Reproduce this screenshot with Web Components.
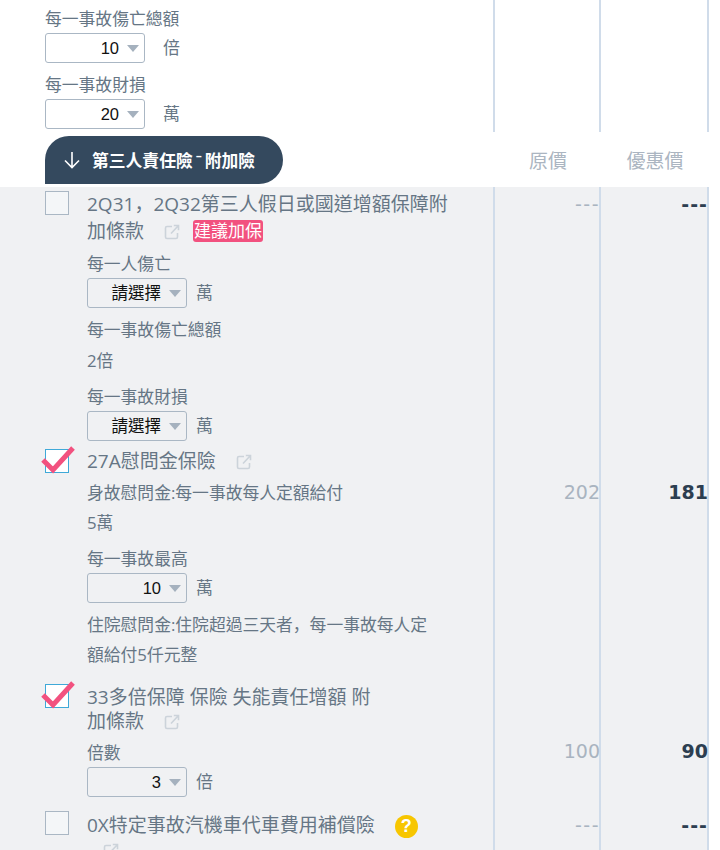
<!DOCTYPE html>
<html lang="zh-Hant">
<head>
<meta charset="utf-8">
<title>附加險</title>
<style>
  html, body { margin: 0; height: 850px; overflow: hidden; background: #fff; }
  body { font-family: "Open Sans", "Noto Sans CJK TC", sans-serif; color: #667685; }
  .comma { font-family: "Noto Sans CJK SC", sans-serif; }
  .macron { display: inline-block; width: 12px; text-align: center; font-family: "Liberation Sans", sans-serif; }
</style>
</head>
<body>

<template id="tpl-select">
  <style>
    :host { display: flex; align-items: center; height: 30px; }
    .box {
      box-sizing: border-box; width: 100px; height: 30px;
      border: 1px solid #aab7c4; border-radius: 3px; background: #fff;
      display: flex; align-items: center; justify-content: flex-end;
      padding-right: 5px; gap: 8px; color: #111; font-size: 16.500px;
      font-family: "Liberation Sans", "Noto Sans CJK TC", sans-serif;
    }
    :host([gray]) .box { background: #f0f1f3; }
    .arrow { width: 0; height: 0; border: 6.500px solid transparent; border-top: 7px solid #a5b1be; border-bottom: 0; }
    .unit { font-size: 17px; color: #667685; margin-left: var(--unit-gap, 9px); }
  </style>
  <div class="box"><span><slot></slot></span><i class="arrow"></i></div>
  <span class="unit"><slot name="unit"></slot></span>
</template>

<template id="tpl-check">
  <style>
    :host { display: block; position: relative; width: 24px; height: 24px; }
    .box { box-sizing: border-box; width: 24px; height: 24px; border: 1px solid #aab7c4; background: #f4f6f8; }
    :host([checked]) .box { border: 1px solid #3fa9d8; background: #fff; }
    svg { display: none; position: absolute; left: -4px; top: -4px; }
    :host([checked]) svg { display: block; }
  </style>
  <div class="box"></div>
  <svg width="36" height="30" viewBox="0 0 36 30"><path d="M2 15l10 10L32 3" fill="none" stroke="#f2517f" stroke-width="5"/></svg>
</template>

<template id="tpl-link">
  <style>
    :host { display: inline-block; width: 16px; height: 16px; vertical-align: -2px; }
    svg { display: block; }
  </style>
  <svg width="16" height="16" viewBox="0 0 16 16" fill="none" stroke="#ccd3da" stroke-width="1.6">
    <path d="M8 2.500H3a1.500 1.500 0 0 0-1.500 1.500v9A1.500 1.500 0 0 0 3 14.500h9a1.500 1.500 0 0 0 1.500-1.500V9"/>
    <path d="M7 9.500L14.500 1.500M9.800 1.500h4.700v4.700"/>
  </svg>
</template>

<template id="tpl-row">
  <style>
    :host { display: grid; grid-template-columns: 495px 106px 108px; width: 709px; }
    .main { box-sizing: border-box; border-right: 2px solid #d0dcea; padding: var(--row-pad, 4px 0 0 45px); display: flex; gap: 18px; min-width: 0; }
    .check { width: 24px; flex: none; }
    .body { flex: 1; min-width: 0; }
    .price { box-sizing: border-box; border-right: 2px solid #d0dcea; text-align: right; display: flex; flex-direction: column; padding-top: var(--price-top, 4px); line-height: 27px; font-family: "DejaVu Sans", sans-serif; font-size: 19px; }
    .old { color: #a9b4c0; }
    .new { color: #2c3e50; font-weight: 700; }
    ::slotted([slot=old]), ::slotted([slot=new]) { margin-right: -1px; }
  </style>
  <div class="main"><div class="check"><slot name="check"></slot></div><div class="body"><slot></slot></div></div>
  <div class="price old"><slot name="old"></slot></div>
  <div class="price new"><slot name="new"></slot></div>
</template>

<template id="tpl-header">
  <style>
    :host { display: grid; grid-template-columns: 495px 106px 108px; width: 709px; height: 55px; box-sizing: border-box; padding-top: 4px; }
    .pill {
      margin-left: 45px; width: 238px; height: 48px; box-sizing: border-box; padding-left: 18px;
      background: #34495e; color: #fff; border-radius: 24px 24px 24px 0;
      display: flex; align-items: center; gap: 11px; font-weight: 700; font-size: 16.800px;
    }
    .col { color: #abb5c1; font-size: 19px; text-align: center; line-height: 50px; }
  </style>
  <div class="pill">
    <svg width="18" height="18" viewBox="0 0 18 18" fill="none" stroke="#fff" stroke-width="1.600"><path d="M9 1v15.500M2 9.500L9 16.500 16 9.500"/></svg>
    <span><slot></slot></span>
  </div>
  <div class="col"><slot name="a"></slot></div>
  <div class="col"><slot name="b"></slot></div>
</template>

<template id="tpl-field">
  <style>
    :host { display: block; font-size: 16.800px; line-height: 24px; color: #667685; margin-top: var(--field-top, 0); }
    .ctl { margin-top: 2px; }
    ::slotted(p) { margin: 0; }
  </style>
  <div><slot></slot></div>
  <div class="ctl"><slot name="control"></slot></div>
</template>

<script>
  function define(name, tplId) {
    customElements.define(name, class extends HTMLElement {
      connectedCallback() {
        if (this.shadowRoot) return;
        this.attachShadow({ mode: 'open' });
        this.shadowRoot.appendChild(document.getElementById(tplId).content.cloneNode(true));
      }
    });
  }
  define('ins-select', 'tpl-select');
  define('ins-check', 'tpl-check');
  define('ins-link', 'tpl-link');
  define('ins-row', 'tpl-row');
  define('ins-header', 'tpl-header');
  define('ins-field', 'tpl-field');

  class InsTag extends HTMLElement {
    connectedCallback() {
      this.attachShadow({ mode: 'open' });
      this.shadowRoot.innerHTML = `
        <style>
          :host { display: inline-block; background: #f2517f; color: #fff; border-radius: 3px;
            font-size: 17px; line-height: 22px; padding: 0 1px; margin: -3px 0 -3px 13px; vertical-align: 1px; }
        </style><slot></slot>`;
    }
  }
  customElements.define('ins-tag', InsTag);

  class InsTitle extends HTMLElement {
    connectedCallback() {
      this.attachShadow({ mode: 'open' });
      this.shadowRoot.innerHTML = `
        <style>
          :host { display: block; font-size: 19px; line-height: 24px; color: #667685; width: 365px; }
          ::slotted(ins-link) { margin-left: 20px; }
        </style><slot></slot>`;
    }
  }
  customElements.define('ins-title', InsTitle);

  class InsHelp extends HTMLElement {
    connectedCallback() {
      this.attachShadow({ mode: 'open' });
      this.shadowRoot.innerHTML = `
        <style>
          :host { display: inline-block; width: 23px; height: 23px; border-radius: 50%; background: #f7c600;
            color: #fff; font: 700 18px/23px "Liberation Sans", sans-serif; text-align: center; margin-left: 20px; vertical-align: 0; }
        </style>?`;
    }
  }
  customElements.define('ins-help', InsHelp);

  class InsPage extends HTMLElement {
    connectedCallback() {
      this.attachShadow({ mode: 'open' });
      this.shadowRoot.innerHTML = `
        <style>
          :host { display: block; width: 720px; height: 850px; overflow: hidden; background: #fff; }
          .list { background: #f0f1f3; width: 709px; }
          .top { height: 132px; }
        </style>
        <div class="top"><slot name="top"></slot></div>
        <slot name="header"></slot>
        <div class="list"><slot></slot></div>`;
    }
  }
  customElements.define('ins-page', InsPage);
</script>

<ins-page>
  <ins-row slot="top" style="height:132px;--row-pad:7px 0 0 45px">
    <div style="margin-left:-42px">
      <ins-field>每一事故傷亡總額
        <ins-select slot="control" style="--unit-gap:18px">10<span slot="unit">倍</span></ins-select>
      </ins-field>
      <ins-field style="--field-top:10px">每一事故財損
        <ins-select slot="control" style="--unit-gap:18px;margin-top:2px">20<span slot="unit">萬</span></ins-select>
      </ins-field>
    </div>
  </ins-row>

  <ins-header slot="header">第三人責任險<span class="macron">ˉ</span>附加險<span slot="a">原價</span><span slot="b">優惠價</span></ins-header>

  <ins-row>
    <ins-check slot="check"></ins-check>
    <ins-title style="line-height:27px;margin-top:-2px">2Q31<span class="comma" lang="zh-Hans">，</span>2Q32第三人假日或國道增額保障附加條款<ins-link></ins-link><ins-tag>建議加保</ins-tag></ins-title>
    <ins-field style="--field-top:7px">每一人傷亡
      <ins-select slot="control" gray>請選擇<span slot="unit">萬</span></ins-select>
    </ins-field>
    <ins-field style="--field-top:10px">每一事故傷亡總額
      <p style="margin-top:7px">2倍</p>
    </ins-field>
    <ins-field style="--field-top:12px">每一事故財損
      <ins-select slot="control" gray style="margin-top:1px">請選擇<span slot="unit">萬</span></ins-select>
    </ins-field>
    <span slot="old" style="letter-spacing:1.500px">---</span>
    <span slot="new" style="letter-spacing:1px">---</span>
  </ins-row>

  <ins-row style="--row-pad:8px 0 0 45px;--price-top:38px">
    <ins-check slot="check" checked></ins-check>
    <ins-title>27A慰問金保險<ins-link></ins-link></ins-title>
    <ins-field style="--field-top:8px">身故慰問金:每一事故每人定額給付
      <p style="margin-top:6px">5萬</p>
    </ins-field>
    <ins-field style="--field-top:12px">每一事故最高
      <ins-select slot="control" gray style="margin-top:2px">10<span slot="unit">萬</span></ins-select>
    </ins-field>
    <ins-field style="--field-top:6px;width:345px;line-height:30px">住院慰問金:住院超過三天者<span class="comma" lang="zh-Hans">，</span>每一事故每人定額給付5仟元整</ins-field>
    <span slot="old">202</span>
    <span slot="new">181</span>
  </ins-row>

  <ins-row style="--row-pad:12px 0 0 45px;--price-top:66px">
    <ins-check slot="check" checked></ins-check>
    <ins-title style="width:290px;margin-top:1px">33多倍保障 保險 失能責任增額 附加條款<ins-link></ins-link></ins-title>
    <ins-field style="--field-top:8px">倍數
      <ins-select slot="control" gray>3<span slot="unit">倍</span></ins-select>
    </ins-field>
    <span slot="old">100</span>
    <span slot="new">90</span>
  </ins-row>

  <ins-row style="--row-pad:14px 0 0 45px;--price-top:15px;height:100px">
    <ins-check slot="check"></ins-check>
    <ins-title style="margin-top:2px">0X特定事故汽機車代車費用補償險<ins-help></ins-help><br><ins-link style="margin-left:16px"></ins-link></ins-title>
    <span slot="old" style="letter-spacing:1.500px">---</span>
    <span slot="new" style="letter-spacing:1px">---</span>
  </ins-row>
</ins-page>

</body>
</html>
